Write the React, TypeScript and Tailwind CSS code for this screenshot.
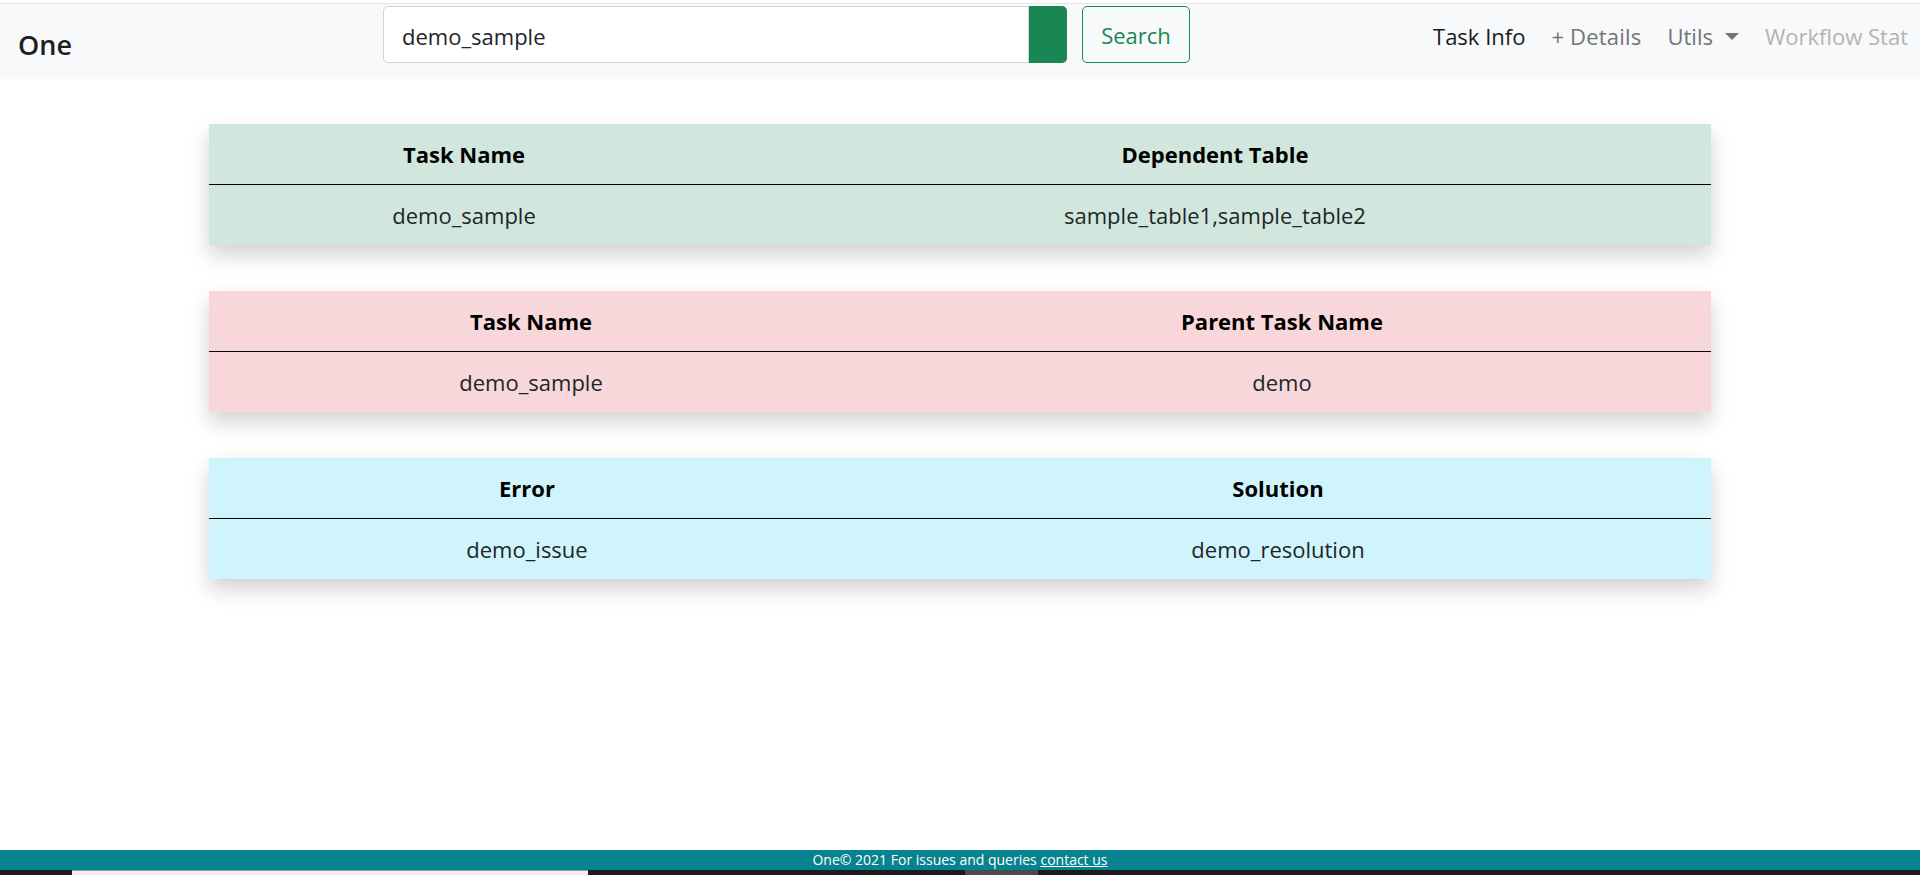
import React from 'react';

type InfoTable = {
  bg: string;
  firstCol: string;
  heads: [string, string];
  row: [string, string];
};

const tables: InfoTable[] = [
  { bg: 'bg-[#d1e7dd]', firstCol: 'w-[510px]', heads: ['Task Name', 'Dependent Table'], row: ['demo_sample', 'sample_table1,sample_table2'] },
  { bg: 'bg-[#f8d7da]', firstCol: 'w-[644px]', heads: ['Task Name', 'Parent Task Name'], row: ['demo_sample', 'demo'] },
  { bg: 'bg-[#cff4fc]', firstCol: 'w-[636px]', heads: ['Error', 'Solution'], row: ['demo_issue', 'demo_resolution'] },
];

const App: React.FC = () => {
  return (
    <div className="h-[875px] flex flex-col bg-white pt-[3px] font-['Open_Sans',sans-serif] text-[#212529]">
      {/* Navbar */}
      <nav className="h-[76px] shrink-0 flex items-start bg-[#f8f9fa] border-t border-[#e3e5e8] pt-[2px]">
        <div className="w-[383px] pl-[18px] mt-[21px] text-[27px] leading-[36px] font-semibold text-[#1f1f1f]">One</div>

        <div className="flex h-[57px]">
          <input
            readOnly
            value="demo_sample"
            className="w-[646px] h-full bg-white border border-[#ced4da] rounded-l-[5px] pl-[18px] pt-[2px] text-[22px] text-[#212529] outline-none"
          />
          <div className="w-[38px] h-full bg-[#198754] rounded-r-[5px]" />
        </div>

        <button className="ml-[15px] w-[108px] h-[57px] pt-[2px] border border-[#198754] rounded-[5px] text-[22px] text-[#198754]">
          Search
        </button>

        <div className="flex-1 h-[60px] flex items-center justify-end gap-[26px] pr-[12px] text-[22px]">
          <span className="text-[#1a1a1a]">Task Info</span>
          <span className="text-[#737373] tracking-[0.2px]">+ Details</span>
          <span className="text-[#737373] flex items-center">
            Utils
            <span className="ml-[12px] w-0 h-0 border-x-[7px] border-x-transparent border-t-[7px] border-t-[#737373]" />
          </span>
          <span className="text-[#b3b3b3]">Workflow Stat</span>
        </div>
      </nav>

      {/* Tables */}
      <main className="flex-1 flex flex-col gap-[46px] pt-[45px]">
        {tables.map((t, i) => (
          <div key={i} className={`w-[1502px] mx-auto ${t.bg} shadow-[0_10px_20px_rgba(0,0,0,0.18)]`}>
            <table className="w-full table-fixed text-center text-[22px]">
              <colgroup>
                <col className={t.firstCol} />
                <col />
              </colgroup>
              <thead>
                <tr className="h-[60px] border-b border-black">
                  <th className="font-bold text-black pt-[2px]">{t.heads[0]}</th>
                  <th className="font-bold text-black pt-[2px]">{t.heads[1]}</th>
                </tr>
              </thead>
              <tbody>
                <tr className="h-[61px]">
                  <td className="pt-[2px]">{t.row[0]}</td>
                  <td className="pt-[2px]">{t.row[1]}</td>
                </tr>
              </tbody>
            </table>
          </div>
        ))}
      </main>

      {/* Footer */}
      <footer className="h-[20px] shrink-0 bg-[#06838f] flex items-center justify-center text-[14px] leading-[20px] text-white">
        One© 2021 For issues and queries&nbsp;<a className="underline">contact us</a>
      </footer>
      <div className="h-[5px] shrink-0 bg-[#1b1b1b] flex">
        <div className="ml-[72px] w-[516px] h-full bg-[#ededed] border-t border-[#9a9a9a]" />
        <div className="ml-[377px] w-[73px] h-full bg-[#4a4a4a]" />
      </div>
    </div>
  );
};

export default App;
